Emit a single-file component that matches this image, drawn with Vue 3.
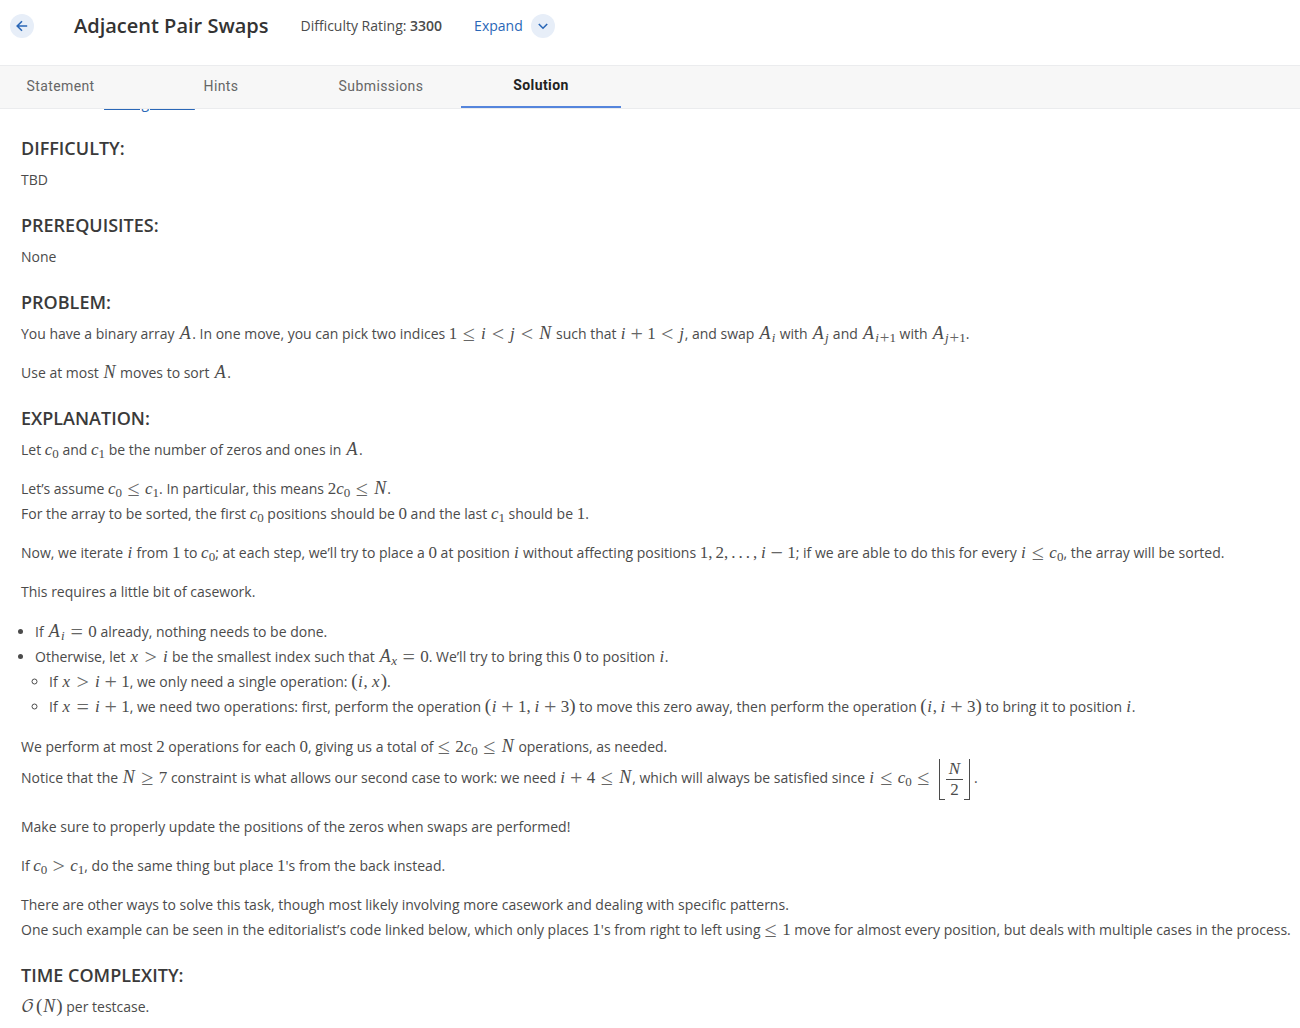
<script setup>
import { h, ref } from 'vue'

const tabs = ['Statement', 'Hints', 'Submissions', 'Solution']
const active = ref('Solution')

const atomClass = (ch) => {
  if ('≤≥<>='.includes(ch)) return 'rel'
  if ('+−'.includes(ch)) return 'bin'
  if (ch === ',' || ch === '.') return 'punct'
  if ('()'.includes(ch)) return 'paren'
  if (ch === '𝒪') return 'script'
  if (/[A-Z]/.test(ch)) return 'var cap'
  if (ch === 'x') return 'var wide'
  if (/[a-z]/.test(ch)) return 'var'
  return 'num'
}

// Formula source: single characters are atoms, _x or _{...} is a subscript.
const formula = (src) => {
  const out = []
  for (let k = 0; k < src.length; k++) {
    if (src.startsWith('floor', k)) {
      out.push(
        h('span', { class: 'floor' }, [
          h('span', { class: 'frac' }, [h('span', { class: 'top' }, 'N'), h('span', { class: 'bottom' }, '2')]),
        ]),
      )
      k += 4
      continue
    }
    const chars = [...src.slice(k)]
    const ch = chars[0]
    if (ch === ' ') continue
    if (ch === '_') {
      const braced = src[k + 1] === '{'
      const end = braced ? src.indexOf('}', k) : k + 1
      const body = braced ? src.slice(k + 2, end) : src[end]
      out.push(h('sub', formula(body)))
      k = end
      continue
    }
    out.push(h('span', { class: atomClass(ch) }, ch))
    k += ch.length - 1
  }
  return out
}

const RichText = (props) =>
  props.text.split('$').map((part, n) => (n % 2 ? h('span', { class: 'math' }, formula(part)) : part))
RichText.props = ['text']

const sections = [
  { title: 'DIFFICULTY:', blocks: [['TBD']] },
  { title: 'PREREQUISITES:', blocks: [['None']] },
  {
    title: 'PROBLEM:',
    blocks: [
      ['You have a binary array $A$. In one move, you can pick two indices $1 ≤ i < j < N$ such that $i + 1 < j$, and swap $A_i$ with $A_j$ and $A_{i+1}$ with $A_{j+1}$.'],
      ['Use at most $N$ moves to sort $A$.'],
    ],
  },
  {
    title: 'EXPLANATION:',
    blocks: [
      ['Let $c_0$ and $c_1$ be the number of zeros and ones in $A$.'],
      [
        'Let’s assume $c_0 ≤ c_1$. In particular, this means $2c_0 ≤ N$.',
        'For the array to be sorted, the first $c_0$ positions should be $0$ and the last $c_1$ should be $1$.',
      ],
      ['Now, we iterate $i$ from $1$ to $c_0$; at each step, we’ll try to place a $0$ at position $i$ without affecting positions $1,2,...,i − 1$; if we are able to do this for every $i ≤ c_0$, the array will be sorted.'],
      ['This requires a little bit of casework.'],
      {
        items: [
          { text: 'If $A_i = 0$ already, nothing needs to be done.' },
          {
            text: 'Otherwise, let $x > i$ be the smallest index such that $A_x = 0$. We’ll try to bring this $0$ to position $i$.',
            items: [
              'If $x > i + 1$, we only need a single operation: $(i, x)$.',
              'If $x = i + 1$, we need two operations: first, perform the operation $(i + 1, i + 3)$ to move this zero away, then perform the operation $(i, i + 3)$ to bring it to position $i$.',
            ],
          },
        ],
      },
      [
        'We perform at most $2$ operations for each $0$, giving us a total of $≤ 2c_0 ≤ N$ operations, as needed.',
        'Notice that the $N ≥ 7$ constraint is what allows our second case to work: we need $i + 4 ≤ N$, which will always be satisfied since $i ≤ c_0 ≤ floor$.',
      ],
      ['Make sure to properly update the positions of the zeros when swaps are performed!'],
      ["If $c_0 > c_1$, do the same thing but place $1$'s from the back instead."],
      [
        'There are other ways to solve this task, though most likely involving more casework and dealing with specific patterns.',
        "One such example can be seen in the editorialist’s code linked below, which only places $1$'s from right to left using $≤ 1$ move for almost every position, but deals with multiple cases in the process.",
      ],
    ],
  },
  { title: 'TIME COMPLEXITY:', blocks: [['$𝒪(N)$ per testcase.']] },
]
</script>

<template>
  <div class="page">
    <header class="header">
      <button class="round" type="button" aria-label="Back">
        <svg width="12" height="12" viewBox="0 0 12 12"><path d="M11.2 6H1.5M6 1.2L1.2 6L6 10.8" /></svg>
      </button>
      <h1>Adjacent Pair Swaps</h1>
      <p class="rating">Difficulty Rating: <strong>3300</strong></p>
      <button class="expand" type="button">
        <span class="label">Expand</span>
        <span class="round"><svg width="12" height="12" viewBox="0 0 12 12"><path d="M1.8 4L6 8.2L10.2 4" /></svg></span>
      </button>
    </header>
    <nav class="tabs" role="tablist">
      <button
        v-for="tab in tabs"
        :key="tab"
        type="button"
        role="tab"
        :aria-selected="tab === active"
        :class="['tab', { active: tab === active }]"
        @click="active = tab"
      >{{ tab }}</button>
    </nav>
    <main class="article">
      <p class="credit">Editorialists: <a href="#">iceknight1093</a></p>
      <section v-for="section in sections" :key="section.title">
        <h2>{{ section.title }}</h2>
        <template v-for="(block, b) in section.blocks" :key="b">
          <ul v-if="block.items">
            <li v-for="item in block.items" :key="item.text">
              <RichText :text="item.text" />
              <ul v-if="item.items">
                <li v-for="sub in item.items" :key="sub"><RichText :text="sub" /></li>
              </ul>
            </li>
          </ul>
          <p v-else><template v-for="(line, n) in block" :key="n"><br v-if="n" /><RichText :text="line" /></template></p>
        </template>
      </section>
    </main>
  </div>
</template>

<style>
body {
  background: #fff;
}
</style>

<style scoped>
.page {
  font-family: "Open Sans", "Noto Sans", sans-serif;
  font-size: 14px;
  color: #4b4b4b;
  height: 100vh;
  display: flex;
  flex-direction: column;
  overflow: hidden;
}
button {
  font: inherit;
  border: 0;
  background: none;
  padding: 0;
  cursor: pointer;
}
.header {
  display: flex;
  align-items: center;
  height: 52px;
  padding: 0 10px 13px;
  flex: none;
}
.round {
  display: flex;
  align-items: center;
  justify-content: center;
  width: 24px;
  height: 24px;
  border-radius: 50%;
  background: #e7eef8;
}
.round svg {
  fill: none;
  stroke: #2a67b7;
  stroke-width: 1.6;
}
h1 {
  margin: 0 32px 0 40px;
  font-size: 20px;
  line-height: 28px;
  font-weight: 600;
  color: #333;
}
p {
  margin: 0 0 14px;
}
.rating {
  margin: 0 32px 0 0;
  padding-bottom: 2px;
}
.rating strong {
  font-weight: 600;
}
.expand {
  display: flex;
  align-items: center;
  gap: 8px;
  color: #2a67b7;
}
.label {
  padding-bottom: 2px;
}
.tabs {
  display: flex;
  flex: none;
  height: 42px;
  border-top: 1px solid #ebecee;
  border-bottom: 1px solid #ebecee;
  background: #f7f7f7;
}
.tab {
  width: 160px;
  padding-bottom: 2px;
  font-family: Roboto, sans-serif;
  font-size: 14px;
  letter-spacing: 0.4px;
  color: #666;
}
.tab:first-child {
  width: 141px;
  padding-right: 20px;
}
.tab.active {
  font-weight: 700;
  color: #222;
  border-bottom: 2px solid #5585dc;
}
.article {
  flex: 1;
  min-height: 0;
  overflow: hidden;
  padding: 0 0 0 21px;
  line-height: 25px;
}
.credit {
  margin-top: -19px;
}
a {
  color: #2a67b7;
  text-decoration: underline;
}
h2 {
  margin: 0 0 6px;
  padding-top: 7px;
  font-size: 18px;
  line-height: 25px;
  font-weight: 600;
  color: #3a3a3a;
}
ul {
  margin: 15px 0;
  padding-left: 14px;
  list-style: disc;
}
ul ul {
  margin: 0;
  list-style: circle;
}
.article :deep(.math) {
  font-family: "Liberation Serif", serif;
  font-size: 17px;
  line-height: 18px;
  white-space: nowrap;
}
.article :deep(.var) {
  display: inline-block;
  min-width: 6px;
  font-style: italic;
  text-align: center;
}
.article :deep(.cap) {
  min-width: 14px;
  font-size: 18px;
}
.article :deep(.wide) {
  min-width: 10px;
}
.article :deep(.rel),
.article :deep(.bin) {
  display: inline-block;
  min-width: 13px;
  margin: 0 5px;
  font-size: 22px;
  line-height: 16px;
  vertical-align: -2px;
  text-align: center;
  color: #666;
}
.article :deep(.bin) {
  margin: 0 4px;
}
.article :deep(.rel:first-child) {
  margin-left: 0;
}
.article :deep(.punct) {
  margin-right: 3px;
}
.article :deep(.paren) {
  font-size: 19px;
}
.article :deep(sub) {
  font-size: 13px;
  line-height: 0;
  vertical-align: -3px;
}
.article :deep(sub .bin) {
  min-width: 10px;
  margin: 0;
  font-size: 17px;
  line-height: 12px;
  vertical-align: -1px;
}
.article :deep(sub .var) {
  min-width: 5px;
}
.article :deep(.cap + sub) {
  margin-left: -1px;
}
.article :deep(.script) {
  display: inline-block;
  min-width: 15px;
  font-family: "DejaVu Math TeX Gyre", "DejaVu Serif", serif;
  font-size: 17px;
}
.article :deep(.floor) {
  display: inline-block;
  position: relative;
  margin: 0 4px;
  padding: 0 6px;
  vertical-align: middle;
  border: solid #4b4b4b;
  border-width: 0 1px;
}
.article :deep(.floor)::before,
.article :deep(.floor)::after {
  content: "";
  position: absolute;
  bottom: 0;
  width: 5px;
  border-bottom: 1px solid #4b4b4b;
}
.article :deep(.floor)::before {
  left: 0;
}
.article :deep(.floor)::after {
  right: 0;
}
.article :deep(.frac) {
  display: flex;
  flex-direction: column;
  text-align: center;
  line-height: 20px;
}
.article :deep(.top) {
  font-style: italic;
  padding: 0 3px;
  border-bottom: 1px solid #4b4b4b;
}
</style>
